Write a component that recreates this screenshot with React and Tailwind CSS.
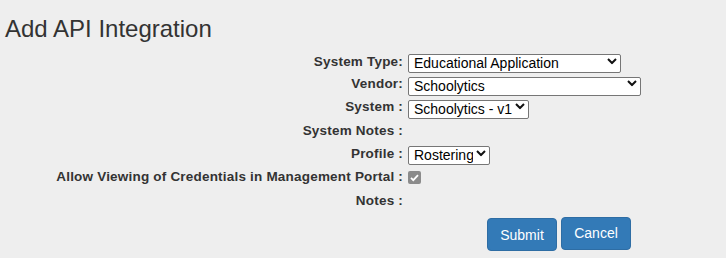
import React from "react";

const font = { fontFamily: '"Liberation Sans", Arial, sans-serif' };

function Chevron() {
  return (
    <svg
      className="pointer-events-none absolute right-[4px] top-1/2 -translate-y-1/2 w-[10px] h-[7px]"
      viewBox="0 0 10 7"
      fill="none"
      stroke="#111"
      strokeWidth="2"
    >
      <path d="M1 1.5l4 4 4-4" />
    </svg>
  );
}

function Select({ width, value }) {
  return (
    <div className={`relative ${width} h-[19px]`}>
      <select
        defaultValue={value}
        className="appearance-none w-full h-full bg-white border border-[#767676] rounded-[2px] pl-[5px] pr-[16px] text-[14px] leading-[17px] text-black outline-none"
      >
        <option>{value}</option>
      </select>
      <Chevron />
    </div>
  );
}

function Label({ children }) {
  return (
    <div className="flex items-center justify-end h-full pt-[2px] text-[13.5px] leading-[16px] tracking-[0.2px] font-bold text-[#333] whitespace-nowrap">
      {children}
    </div>
  );
}

export default function App() {
  return (
    <div
      className="w-[726px] h-[258px] bg-[#eeeeee] text-[#333] overflow-hidden"
      style={font}
    >
      <h1 className="pt-[16px] pl-[5px] text-[24px] leading-[26px] font-normal text-[#333]">
        Add API Integration
      </h1>

      <form
        onSubmit={(e) => e.preventDefault()}
        className="mt-[7px] ml-[55px] grid grid-cols-[348px_auto] gap-x-[5px] grid-rows-[23px_22px_24px_24px_21px_26px_21px_auto]"
      >
        <Label>System Type:</Label>
        <div className="flex items-center">
          <Select width="w-[213px]" value="Educational Application" />
        </div>

        <Label>Vendor:</Label>
        <div className="flex items-center">
          <Select width="w-[233px]" value="Schoolytics" />
        </div>

        <Label>System :</Label>
        <div className="flex items-center">
          <Select width="w-[121px]" value="Schoolytics - v1" />
        </div>

        <Label>System Notes :</Label>
        <div />

        <Label>Profile :</Label>
        <div className="flex items-center">
          <Select width="w-[82px]" value="Rostering" />
        </div>

        <Label>Allow Viewing of Credentials in Management Portal :</Label>
        <div className="flex items-center pt-[2px]">
          <div className="w-[13px] h-[13px] rounded-[2px] bg-[#8b8b8b] flex items-center justify-center">
            <svg viewBox="0 0 13 13" className="w-[13px] h-[13px]" fill="none" stroke="#fff" strokeWidth="1.8">
              <path d="M3 6.8l2.3 2.3L10 4.2" />
            </svg>
          </div>
        </div>

        <Label>Notes :</Label>
        <div />

        <div />
        <div className="flex items-start gap-[4px] pl-[79px] pt-[7px]">
          <button
            type="submit"
            className="mt-[1px] w-[70px] h-[33px] bg-[#337ab7] border border-[#2e6da4] rounded-[4px] text-white text-[14px] leading-[20px]"
          >
            Submit
          </button>
          <button
            type="button"
            className="w-[70px] h-[33px] bg-[#337ab7] border border-[#2e6da4] rounded-[4px] text-white text-[14px] leading-[20px] pb-[2px]"
          >
            Cancel
          </button>
        </div>
      </form>
    </div>
  );
}
